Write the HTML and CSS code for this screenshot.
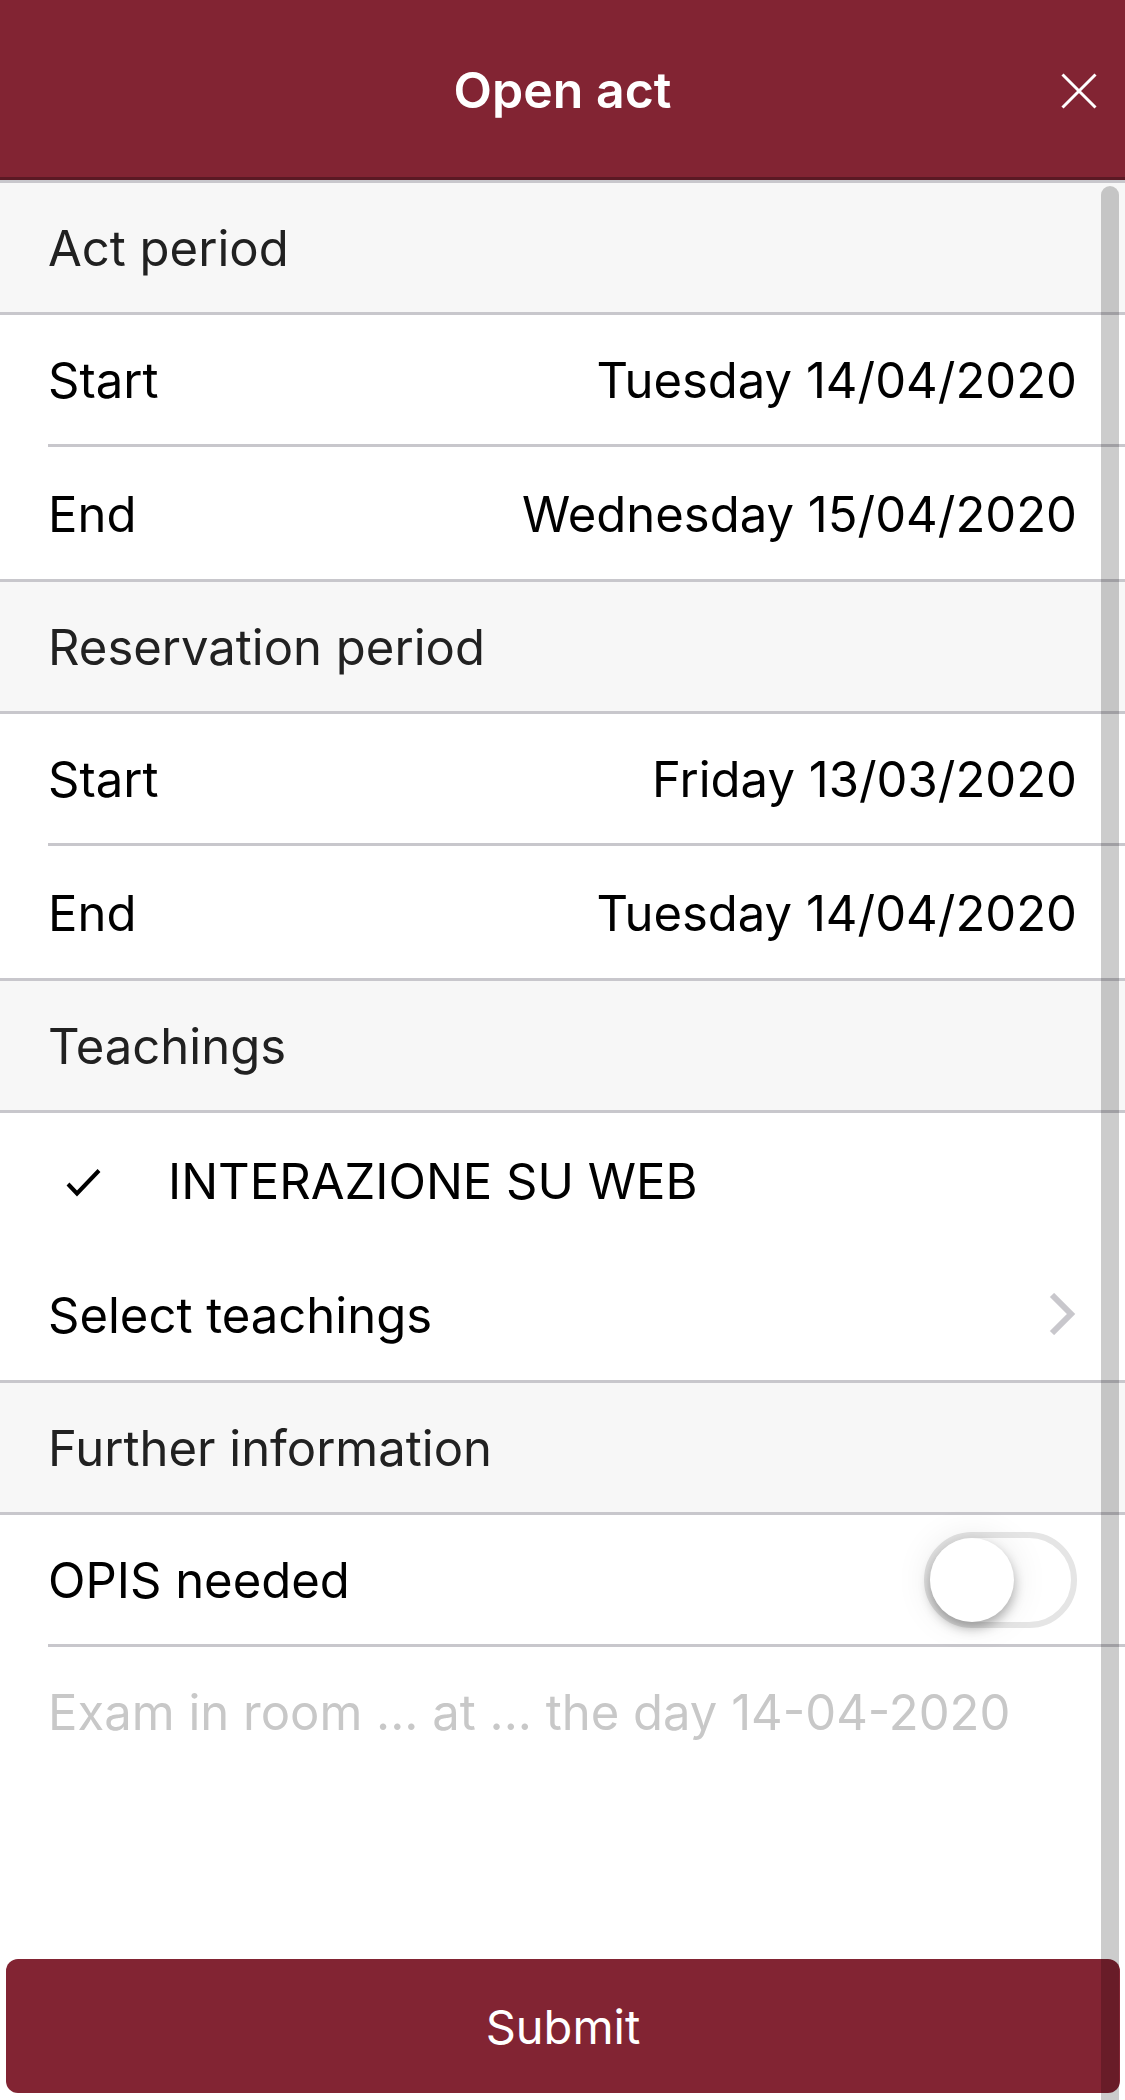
FILE: index.html
```html
<!DOCTYPE html>
<html lang="en">
<head>
<meta charset="utf-8">
<meta name="viewport" content="width=device-width, initial-scale=1">
<title>Open act</title>
<link rel="stylesheet" href="styles.css">
</head>
<body>
<div class="page">
  <header class="navbar">
    <h1 class="navbar-title">Open act</h1>
    <button class="close" type="button" aria-label="Close">
      <svg class="close-icon" viewBox="0 0 36 36" aria-hidden="true"><path d="M1.5 1.5 34.5 34.5M34.5 1.5 1.5 34.5"/></svg>
    </button>
  </header>
  <form class="form">
    <h2 class="heading">Act period</h2>
    <div class="row row-divided">
      <label class="label" for="act-start">Start</label>
      <input class="date" id="act-start" type="text" value="Tuesday 14/04/2020" readonly>
    </div>
    <div class="row">
      <label class="label" for="act-end">End</label>
      <input class="date" id="act-end" type="text" value="Wednesday 15/04/2020" readonly>
    </div>
    <h2 class="heading">Reservation period</h2>
    <div class="row row-divided">
      <label class="label" for="res-start">Start</label>
      <input class="date" id="res-start" type="text" value="Friday 13/03/2020" readonly>
    </div>
    <div class="row">
      <label class="label" for="res-end">End</label>
      <input class="date" id="res-end" type="text" value="Tuesday 14/04/2020" readonly>
    </div>
    <h2 class="heading">Teachings</h2>
    <div class="row row-teaching">
      <svg class="check-icon" viewBox="0 0 72 36" aria-hidden="true"><path d="M20 21 29 30.500 51 7.500"/></svg>
      <span class="label">INTERAZIONE SU WEB</span>
    </div>
    <a class="row" href="#teachings">
      <span class="label">Select teachings</span>
      <svg class="chevron" viewBox="0 0 28 42" aria-hidden="true"><path d="M3 2 22 21 3 40"/></svg>
    </a>
    <h2 class="heading">Further information</h2>
    <div class="row row-divided">
      <label class="label" for="opis">OPIS needed</label>
      <input class="toggle" id="opis" type="checkbox" role="switch">
    </div>
    <textarea class="notes" aria-label="Notes" placeholder="Exam in room ... at ... the day 14-04-2020"></textarea>
    <button class="submit" type="submit">Submit</button>
    <div class="scrollbar" aria-hidden="true"></div>
  </form>
</div>
</body>
</html>
```

FILE: styles.css
```css
* {
  box-sizing: border-box;
}

body {
  margin: 0;
  background: #fff;
  color: #000;
  font-family: Inter, "Liberation Sans", sans-serif;
  font-size: 49px;
  line-height: 60px;
}

input,
textarea,
button {
  font: inherit;
  color: inherit;
}

.page {
  display: flex;
  flex-direction: column;
  min-height: 100vh;
}

.navbar {
  display: grid;
  grid-template-columns: 1fr auto 1fr;
  align-items: center;
  height: 180px;
  padding: 0 28px;
  border-bottom: 3px solid #5b1924;
  background: #822433;
  color: #fff;
}

.navbar-title {
  grid-column: 2;
  margin: 0;
  padding-top: 2px;
  font-size: 50px;
  font-weight: 600;
}

.close {
  justify-self: end;
  display: flex;
  padding: 4px 0 0;
  border: 0;
  background: none;
}

.close-icon {
  width: 36px;
  height: 36px;
  fill: none;
  stroke: currentColor;
  stroke-width: 3;
}

.form {
  position: relative;
  flex: 1;
  display: flex;
  flex-direction: column;
}

.heading {
  margin: 0;
  padding: 36px 48px 33px;
  border: solid #c8c7cc;
  border-width: 3px 0;
  background: #f7f7f7;
  color: #212121;
  font-size: inherit;
  font-weight: 400;
}

.row {
  display: flex;
  align-items: center;
  min-height: 132px;
  margin-left: 48px;
  padding-right: 48px;
  color: inherit;
  text-decoration: none;
}

.row-divided {
  border-bottom: 3px solid #c8c7cc;
}

.row-teaching {
  min-height: 135px;
}

.label {
  flex: none;
  padding-top: 3px;
}

.date {
  flex: 1;
  min-width: 0;
  padding: 3px 0 0;
  border: 0;
  outline: 0;
  background: none;
  text-align: right;
}

.check-icon {
  flex: none;
  width: 72px;
  height: 36px;
  margin-right: 48px;
  fill: none;
  stroke: #000;
  stroke-width: 4;
}

.chevron {
  width: 28px;
  height: 42px;
  margin-left: auto;
  fill: none;
  stroke: #c8c7cc;
  stroke-width: 6;
}

.toggle {
  appearance: none;
  flex: none;
  width: 153px;
  height: 96px;
  margin: 0 0 0 auto;
  border: 6px solid #e5e5e5;
  border-radius: 48px;
  background: #fff;
}

.toggle::before {
  content: "";
  display: block;
  width: 84px;
  height: 84px;
  border-radius: 50%;
  background: #fff;
  box-shadow: 0 6px 12px rgba(0, 0, 0, 0.3), 0 0 36px rgba(0, 0, 0, 0.1);
}

.toggle:checked {
  border-color: #822433;
  background: #822433;
}

.toggle:checked::before {
  margin-left: auto;
}

.notes {
  flex: 1;
  min-height: 260px;
  padding: 36px 48px 0;
  border: 0;
  outline: 0;
  background: none;
  resize: none;
}

.notes::placeholder {
  color: #c8c8c8;
}

.submit {
  height: 134px;
  margin: 0 5px 7px 6px;
  padding: 2px 0 0;
  border: 0;
  border-radius: 12px;
  background: #822433;
  color: #fff;
  font-size: 47px;
}

.scrollbar {
  position: absolute;
  top: 6px;
  right: 6px;
  bottom: 0;
  width: 18px;
  border-radius: 9px 9px 0 0;
  background: rgba(0, 0, 0, 0.2);
  pointer-events: none;
}
```
